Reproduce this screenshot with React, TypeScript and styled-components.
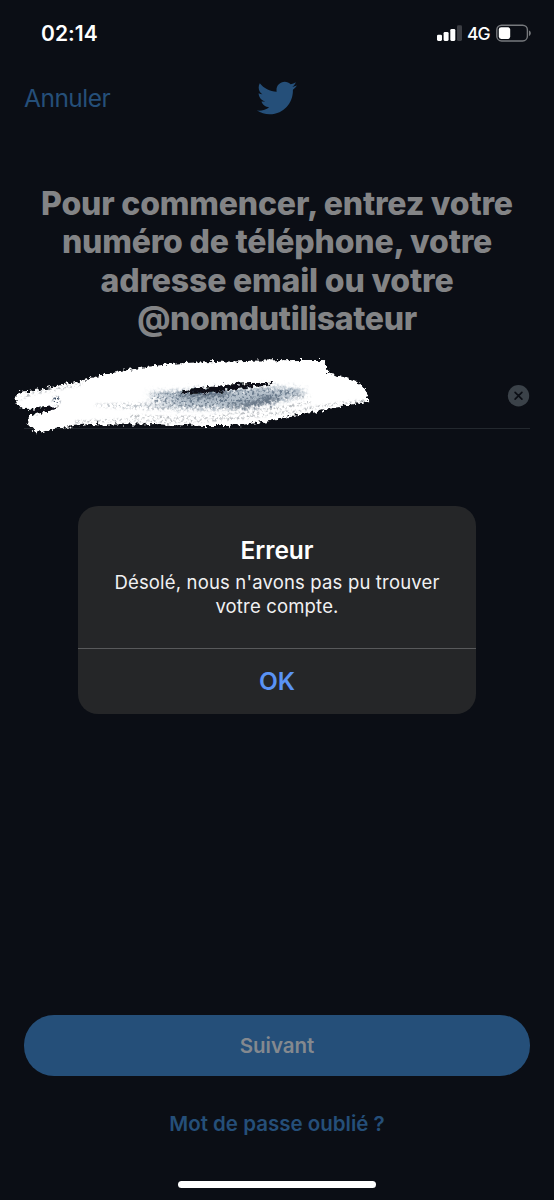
import React from "react";
import styled, { createGlobalStyle } from "styled-components";
import { FaTwitter } from "react-icons/fa";

const GlobalStyle = createGlobalStyle`
  * { box-sizing: border-box; }
  body { margin: 0; background: #0b0e15; }
  button { border: 0; padding: 0; background: none; font: inherit; color: inherit; }
`;

const Screen = styled.main`
  position: relative;
  width: 554px;
  height: 1200px;
  display: flex;
  flex-direction: column;
  overflow: hidden;
  background: #0b0e15;
  font-family: Inter, "Liberation Sans", sans-serif;
`;

const StatusBar = styled.header`
  height: 66px;
  flex: none;
  display: flex;
  justify-content: space-between;
  padding: 0 22px 0 41px;
  color: #fff;
`;

const Clock = styled.time`
  font-size: 21px;
  line-height: 26px;
  padding-top: 20.5px;
  font-weight: 600;
  letter-spacing: 0.05px;
`;

const StatusIcons = styled.div`
  display: flex;
  align-items: flex-start;
  padding-top: 21px;
`;

const Network = styled.span`
  width: 23px;
  margin: 0 6px 0 5px;
  font-size: 17.5px;
  line-height: 26px;
  font-weight: 500;
  letter-spacing: -1px;
  white-space: nowrap;
`;

const NavBar = styled.nav`
  height: 64px;
  flex: none;
  display: grid;
  grid-template-columns: 1fr 40px 1fr;
  align-items: center;
  padding: 0 24px;
  color: #254f79;
`;

const Cancel = styled.button`
  justify-self: start;
  font-size: 24.5px;
  line-height: 30px;
  letter-spacing: -0.5px;
`;

const Title = styled.h1`
  margin: 55px 0 0;
  text-align: center;
  font-size: 32px;
  line-height: 38.4px;
  font-weight: 800;
  letter-spacing: -0.18px;
  color: #838486;
  white-space: nowrap;
`;

const Handle = styled.span`
  letter-spacing: -0.35px;
`;

const Field = styled.div`
  position: relative;
  height: 73px;
  margin: 17.4px 24px 0;
  flex: none;
  display: flex;
  justify-content: flex-end;
  padding-top: 29px;
  border-bottom: 1px solid #23282e;
`;

const Scribble = styled.svg`
  position: absolute;
  left: -24px;
  top: -11px;
`;

const Spacer = styled.div`
  flex: 1;
`;

const Footer = styled.footer`
  display: flex;
  flex-direction: column;
  align-items: center;
  padding: 0 24px 12px;
`;

const NextButton = styled.button`
  width: 100%;
  height: 61px;
  border-radius: 30px;
  background: #254f79;
  color: #84898f;
  font-size: 20.5px;
  font-weight: 600;
  letter-spacing: -0.05px;
`;

const Forgot = styled.button`
  margin-top: 35px;
  height: 26px;
  font-size: 20.5px;
  line-height: 26px;
  font-weight: 600;
  color: #254f79;
`;

const HomeIndicator = styled.div`
  width: 198px;
  height: 7px;
  margin-top: 44px;
  border-radius: 4px;
  background: #fff;
`;

const Alert = styled.section`
  position: absolute;
  left: 78px;
  top: 506px;
  width: 398px;
  height: 208px;
  display: flex;
  flex-direction: column;
  border-radius: 20px;
  overflow: hidden;
  background: #252628;
  text-align: center;
`;

const AlertBody = styled.div`
  height: 143px;
  padding-top: 29px;
  border-bottom: 1px solid #58595b;
`;

const AlertTitle = styled.h2`
  margin: 0;
  font-size: 24.5px;
  line-height: 31px;
  font-weight: 600;
  color: #fff;
`;

const AlertText = styled.p`
  margin: 4px 0 0;
  font-size: 18.5px;
  line-height: 24px;
  letter-spacing: 0.17px;
  color: #f1f1f2;
  white-space: nowrap;
`;

const AlertAction = styled.button`
  flex: 1;
  padding-bottom: 1px;
  font-size: 24.5px;
  font-weight: 600;
  color: #5a93f5;
`;

const SignalIcon = () => (
  <svg width="25" height="26" viewBox="0 0 25 26">
    <rect x="0" y="13.7" width="5" height="6.2" rx="1.3" fill="#fff" />
    <rect x="6.6" y="11" width="5" height="8.9" rx="1.3" fill="#fff" />
    <rect x="13.3" y="8" width="5" height="11.9" rx="1.3" fill="#fff" />
    <rect x="20" y="4.3" width="5" height="15.6" rx="1.3" fill="#3b3d43" />
  </svg>
);

const BatteryIcon = () => (
  <svg width="36" height="26" viewBox="0 0 36 26">
    <rect x="0.8" y="4.2" width="30.6" height="15.8" rx="4.8" fill="none" stroke="#77797d" strokeWidth="1.4" />
    <rect x="2.8" y="6.2" width="11.4" height="11.8" rx="2.4" fill="#fff" />
    <path d="M33 9.5c2.4.8 2.4 4.6 0 5.4z" fill="#77797d" />
  </svg>
);

const ClearIcon = () => (
  <svg width="23" height="23" viewBox="0 0 23 23">
    <circle cx="11.5" cy="10.8" r="10.7" fill="#3b4249" />
    <path d="M8.1 7.4l6.8 6.8M14.9 7.4l-6.8 6.8" stroke="#0b0e15" strokeWidth="1.7" strokeLinecap="round" />
  </svg>
);

const ChalkScribble = () => (
  <Scribble width="400" height="100" viewBox="0 0 400 100">
    <defs>
      <filter id="rough" x="-5%" y="-10%" width="110%" height="120%">
        <feTurbulence type="fractalNoise" baseFrequency="0.28" numOctaves="2" seed="4" />
        <feDisplacementMap in="SourceGraphic" scale="8" xChannelSelector="R" yChannelSelector="G" />
        <feGaussianBlur stdDeviation="0.4" />
      </filter>
      <filter id="haze" x="-10%" y="-40%" width="120%" height="180%">
        <feTurbulence type="fractalNoise" baseFrequency="0.3" numOctaves="2" seed="7" result="noise" />
        <feGaussianBlur in="SourceGraphic" stdDeviation="2" result="soft" />
        <feDisplacementMap in="soft" in2="noise" scale="14" xChannelSelector="R" yChannelSelector="G" />
      </filter>
      <filter id="grain" colorInterpolationFilters="sRGB" x="-5%" y="-10%" width="110%" height="120%">
        <feTurbulence type="fractalNoise" baseFrequency="0.4" numOctaves="2" seed="9" />
        <feColorMatrix values="0 0 0 0 0  0 0 0 0 0  0 0 0 0 0  5 0 0 0 -2.4" result="dots" />
        <feGaussianBlur in="SourceGraphic" stdDeviation="1.2" result="soft" />
        <feComposite in="soft" in2="dots" operator="in" />
      </filter>
    </defs>
    <path
      filter="url(#rough)"
      fill="#fff"
      d="M15 51 Q18 46 29 46 Q55 42 80 36 Q112 27 140 23 Q175 17 215 17 Q265 15 300 15 L324 15 Q328 20 327 28 Q346 32 357 37 Q370 47 368 57 Q350 60 333 62 Q315 69 290 71 Q257 80 225 81 Q185 81 155 79 Q120 80 91 79 Q65 81 42 87 Q33 89 30 81 Q25 73 32 70 L55 64 Q38 63 23 64 Q17 61 15 51Z"
    />
    <path filter="url(#rough)" fill="#0b0e15" d="M27 66 Q46 60 58 62 Q49 67 30 69Z" />
    <g filter="url(#haze)">
      <path fill="#8496a8" fillOpacity=".6" d="M145 49 Q180 45 220 46 Q265 40 300 44 Q310 48 298 52 Q268 60 229 63 Q180 64 140 60 L180 57 Z" />
      <path fill="#33475c" fillOpacity=".75" d="M178 48 Q205 44 232 46 L225 51 Q195 53 178 50Z M228 61 Q255 55 280 50 L272 58 Q250 63 230 63Z" />
    </g>
    <path filter="url(#rough)" fill="#0b0e15" d="M180 47 Q195 43 218 41 Q248 37 274 38 L265 41 Q240 43 226 46 Q205 50 180 48Z" />
    <g filter="url(#grain)">
      <path fill="#465b70" fillOpacity=".65" d="M150 49 Q180 46 220 47 Q260 42 290 44 Q305 48 292 52 Q268 59 229 63 Q177 62 153 58Z" />
      <path fill="#7d8995" fillOpacity=".5" d="M95 59 Q150 56 202 59 Q250 58 300 48 L312 51 Q250 65 205 66 Q130 66 95 61Z" />
      <path fill="#20344c" d="M52 53 L59 51 L60 58 L54 60Z" />
    </g>
    <g filter="url(#grain)" fill="none" stroke="#555d67" strokeOpacity=".65" strokeWidth="2">
      <path d="M19 54 L33 48 Q60 44 82 39" />
      <path d="M75 77 Q110 74 145 76 Q190 77 230 74 Q275 69 302 65 Q335 58 365 56" />
      <path d="M130 71 Q190 74 230 70 Q275 65 310 57" />
    </g>
  </Scribble>
);

export default function App() {
  return (
    <Screen>
      <GlobalStyle />
      <StatusBar>
        <Clock>02:14</Clock>
        <StatusIcons>
          <SignalIcon />
          <Network>4G</Network>
          <BatteryIcon />
        </StatusIcons>
      </StatusBar>
      <NavBar>
        <Cancel>Annuler</Cancel>
        <FaTwitter size={40} />
      </NavBar>
      <Title>
        Pour commencer, entrez votre<br />
        numéro de téléphone, votre<br />
        adresse email ou votre<br />
        <Handle>@nomdutilisateur</Handle>
      </Title>
      <Field>
        <ChalkScribble />
        <ClearIcon />
      </Field>
      <Spacer />
      <Footer>
        <NextButton>Suivant</NextButton>
        <Forgot>Mot de passe oublié ?</Forgot>
        <HomeIndicator />
      </Footer>
      <Alert role="alertdialog">
        <AlertBody>
          <AlertTitle>Erreur</AlertTitle>
          <AlertText>
            Désolé, nous n'avons pas pu trouver<br />
            votre compte.
          </AlertText>
        </AlertBody>
        <AlertAction>OK</AlertAction>
      </Alert>
    </Screen>
  );
}
